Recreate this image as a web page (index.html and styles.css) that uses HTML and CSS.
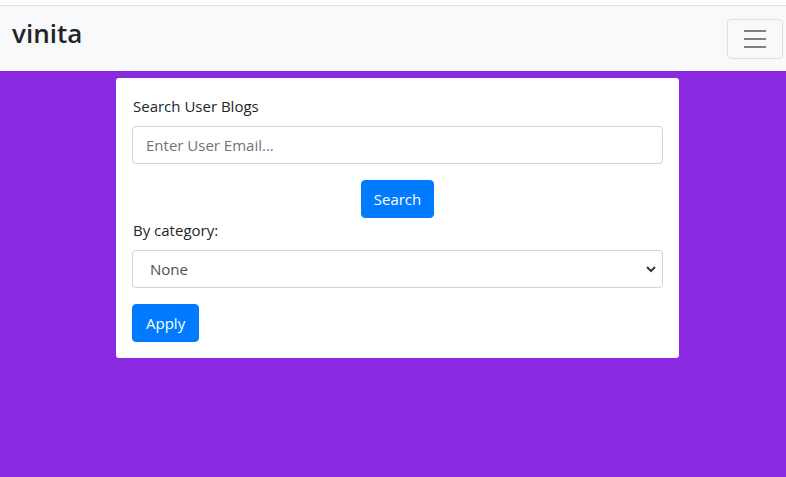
FILE: index.html
```html
<!DOCTYPE html>
<html>
<head>
<meta charset="utf-8">
<link rel="stylesheet" href="styles.css">
</head>
<body>
<div class="topgap"></div>
<nav class="navbar">
  <span class="brand">vinita</span>
  <button class="toggler" type="button">
    <svg width="30" height="30" viewBox="0 0 30 30"><path d="M4 7h22M4 15h22M4 23h22" stroke="#808080" stroke-width="2"/></svg>
  </button>
</nav>
<main class="page">
  <div class="card">
    <label class="lbl">Search User Blogs</label>
    <input class="field" type="text" placeholder="Enter User Email...">
    <div class="center"><button class="btn" type="button">Search</button></div>
    <label class="lbl">By category:</label>
    <div class="selwrap">
      <select class="field sel"><option>None</option></select>
      <svg class="chev" width="10" height="8" viewBox="0 0 10 8"><path d="M1 2l4 4 4-4" fill="none" stroke="#343a40" stroke-width="2"/></svg>
    </div>
    <div><button class="btn apply" type="button">Apply</button></div>
  </div>
</main>
</body>
</html>
```

FILE: styles.css
```css
html, body { margin: 0; padding: 0; height: 100%; }
body {
  font-family: "Open Sans", "Noto Sans", sans-serif;
  font-size: 15px;
  color: #212529;
  background: #8a2be2;
  display: flex;
  flex-direction: column;
}
.topgap { height: 5px; background: #fff; border-bottom: 1px solid #dee2e6; flex: none; }
.navbar {
  height: 65px;
  background: #f8f9fa;
  display: flex;
  align-items: center;
  justify-content: space-between;
  padding: 0 3px 0 12px;
  box-sizing: border-box;
  flex: none;
}
.brand { font-size: 26px; font-weight: 600; margin-top: -12px; color: #212529; }
.toggler {
  width: 56px; height: 40px;
  border: 1px solid rgba(0,0,0,.1);
  border-radius: 4px;
  background: transparent;
  display: flex; align-items: center; justify-content: center;
  padding: 0;
  margin-top: 1px;
}
.page { padding: 7px 107px 0 116px; }
.card {
  width: 563px;
  box-sizing: border-box;
  background: #fff;
  border-radius: 3px;
  padding: 16px;
  display: flex;
  flex-direction: column;
}
.lbl { line-height: 24px; margin-bottom: 8px; display: block; padding-left: 1px; }
.field {
  height: 38px;
  box-sizing: border-box;
  border: 1px solid #ced4da;
  border-radius: 4px;
  padding: 6px 13px;
  font-family: inherit;
  font-size: 15px;
  color: #495057;
  background: #fff;
  width: 100%;
  outline: none;
}
.field::placeholder { color: #6c757d; }
.center { display: flex; justify-content: center; margin: 16px 0 0; }
.btn {
  height: 38px;
  background: #007bff;
  color: #fff;
  border: 1px solid #007bff;
  border-radius: 4px;
  padding: 0 12px;
  font-family: inherit;
  font-size: 15px;
}
.apply { padding: 0 13px; }
.selwrap { position: relative; margin-bottom: 16px; }
.sel { appearance: none; -webkit-appearance: none; padding-left: 17px; }
.chev { position: absolute; right: 7px; top: 15px; }
```
